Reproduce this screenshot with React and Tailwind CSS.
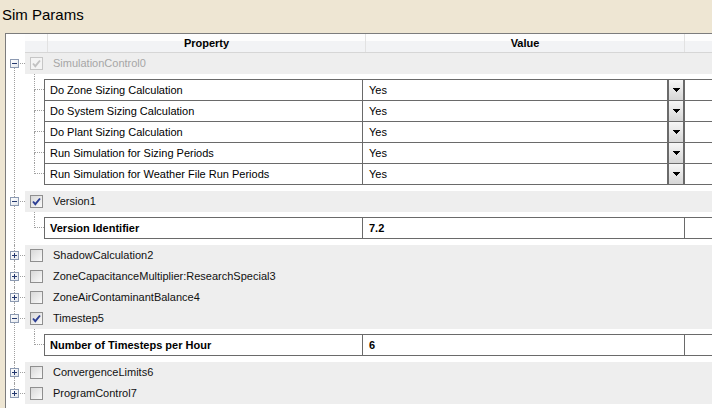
import React from 'react';

const nodes = [
  {
    label: 'SimulationControl0',
    checked: true,
    disabled: true,
    rows: [
      { name: 'Do Zone Sizing Calculation', value: 'Yes', combo: true },
      { name: 'Do System Sizing Calculation', value: 'Yes', combo: true },
      { name: 'Do Plant Sizing Calculation', value: 'Yes', combo: true },
      { name: 'Run Simulation for Sizing Periods', value: 'Yes', combo: true },
      { name: 'Run Simulation for Weather File Run Periods', value: 'Yes', combo: true },
    ],
  },
  { label: 'Version1', checked: true, rows: [{ name: 'Version Identifier', value: '7.2', bold: true }] },
  { label: 'ShadowCalculation2' },
  { label: 'ZoneCapacitanceMultiplier:ResearchSpecial3' },
  { label: 'ZoneAirContaminantBalance4' },
  { label: 'Timestep5', checked: true, rows: [{ name: 'Number of Timesteps per Hour', value: '6', bold: true }] },
  { label: 'ConvergenceLimits6' },
  { label: 'ProgramControl7' },
];

const dots = 'border-dotted border-[#a0a0a0]';

const ExpandBox = ({ open }) => (
  <div className="w-[9px] h-[9px] border border-[#8c9ab2] bg-linear-to-br from-white to-[#e4e8ee] flex items-center justify-center relative">
    <div className="w-[5px] h-px bg-[#24386e]" />
    {!open && <div className="absolute w-px h-[5px] bg-[#24386e]" />}
  </div>
);

const CheckBox = ({ checked, disabled }) => (
  <div
    className={`w-[13px] h-[13px] border flex items-center justify-center ${
      disabled ? 'border-[#c6c6c6] bg-[#f4f4f4]' : 'border-[#8f8f8f] bg-linear-to-br from-[#d8d8d8] to-[#fafafa]'
    }`}
  >
    {checked && (
      <svg width="11" height="11" viewBox="0 0 11 11">
        <path
          d="M2 5.5 L4.3 8.2 L9 2.5"
          fill="none"
          stroke={disabled ? '#c2c2c2' : '#2d3f94'}
          strokeWidth="1.9"
        />
      </svg>
    )}
  </div>
);

const ComboArrow = () => (
  <div className="w-[17px] h-full border-l-2 border-r border-[#6a6a6a] bg-linear-to-b from-[#f6f6f6] to-[#d6d6d6] flex items-center justify-center">
    <svg width="7" height="4" viewBox="0 0 7 4">
      <rect x="0" y="0" width="7" height="1" fill="#000" />
      <rect x="1" y="1" width="5" height="1" fill="#000" />
      <rect x="2" y="2" width="3" height="1" fill="#000" />
      <rect x="3" y="3" width="1" height="1" fill="#000" />
    </svg>
  </div>
);

const ChildBlock = ({ rows }) => (
  <div className="flex">
    {/* connector lines for the child rows */}
    <div className="w-[19px] shrink-0 flex flex-col">
      <div className={`h-[5px] ml-[9px] border-l ${dots}`} />
      {rows.map((r, i) => (
        <div key={r.name} className="h-[21px] ml-[9px] flex flex-col">
          <div className={`h-[11px] w-[10px] border-l border-b ${dots}`} />
          {i < rows.length - 1 && <div className={`flex-1 border-l ${dots}`} />}
        </div>
      ))}
    </div>
    <div className="flex-1 pt-[5px] pb-[6px]">
      <div className="border-b border-[#6a6a6a]">
        {rows.map((r) => (
          <div key={r.name} className={`h-[21px] flex border-t border-[#6a6a6a] ${r.bold ? 'font-bold' : ''}`}>
            <div className="w-[318px] shrink-0 border-l border-[#6a6a6a] pl-[5px] flex items-center">{r.name}</div>
            <div className="w-[322px] shrink-0 border-l border-[#6a6a6a] flex items-center justify-between">
              <span className="pl-[6px]">{r.value}</span>
              {r.combo && <ComboArrow />}
            </div>
            <div className="flex-1 border-l border-[#6a6a6a]" />
          </div>
        ))}
      </div>
    </div>
  </div>
);

const TreeNode = ({ node, first, last }) => (
  <div className="flex">
    <div className="w-[19px] shrink-0 flex flex-col">
      <div className={`h-[6px] ml-[8px] ${first ? '' : `border-l ${dots}`}`} />
      <div className="h-[9px] flex items-center">
        <div className="ml-[4px]">
          <ExpandBox open={!!node.rows} />
        </div>
        <div className={`ml-px w-[5px] border-t ${dots}`} />
      </div>
      <div className={`flex-1 ml-[8px] ${last ? '' : `border-l ${dots}`}`} />
    </div>
    <div className="flex-1 flex flex-col">
      <div className="h-[21px] bg-[#eeeeee] flex items-center">
        <div className="ml-[5px]">
          <CheckBox checked={node.checked} disabled={node.disabled} />
        </div>
        <span className={`ml-[10px] ${node.disabled ? 'text-[#a6a6a6]' : 'text-[#111]'}`}>{node.label}</span>
      </div>
      {node.rows && <ChildBlock rows={node.rows} />}
    </div>
  </div>
);

export default function App() {
  return (
    <div className="w-[712px] h-[408px] overflow-hidden bg-[#eee6d3] flex flex-col font-['Liberation_Sans',Arial,sans-serif] text-[11px] text-black">
      <div className="h-[33px] shrink-0 pl-[2px] pt-[7px] text-[15px] leading-[15px]">Sim Params</div>
      <div className="flex-1 ml-[5px] border-l border-t border-[#7c7c7c] bg-white">
        <div className="h-[19px] ml-[19px] flex border-b border-[#d6d6d6] font-bold bg-[linear-gradient(#fdfdfd_0%,#fdfdfd_38%,#f2f3f5_38%,#f2f3f5_100%)]">
          <div className="w-[23px] shrink-0 border-r border-[#e2e2e2]" />
          <div className="w-[318px] shrink-0 border-r border-[#e2e2e2] flex items-center justify-center">Property</div>
          <div className="w-[319px] shrink-0 border-r border-[#e2e2e2] flex items-center justify-center">Value</div>
          <div className="flex-1" />
        </div>
        {nodes.map((n, i) => (
          <TreeNode key={n.label} node={n} first={i === 0} last={i === nodes.length - 1} />
        ))}
      </div>
    </div>
  );
}
